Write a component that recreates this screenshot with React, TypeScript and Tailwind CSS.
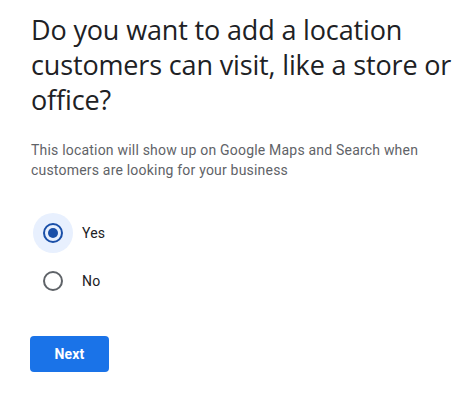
export default function App() {
  return (
    <div className="min-h-screen w-full bg-white pl-[31px] pr-[12px] pt-[12px]">
      <h1 className="font-['Open_Sans',sans-serif] text-[27px] leading-[35px] font-normal text-[#202124] tracking-[-0.15px]">
        Do you want to add a location customers can visit, like a store or office?
      </h1>
      <p className="mt-[23px] font-['Roboto',sans-serif] text-[14px] leading-[20px] tracking-[0.2px] text-[#5f6368] pr-[20px]">
        This location will show up on Google Maps and Search when customers are looking for your business
      </p>

      <div className="mt-[33px] flex flex-col gap-[8px] ml-[2px]">
        <label className="flex items-center gap-[9px]">
          <span className="flex h-[40px] w-[40px] items-center justify-center rounded-full bg-[#e8f0fe]">
            <span className="flex h-[20px] w-[20px] items-center justify-center rounded-full border-2 border-[#1a4fa8]">
              <span className="h-[10px] w-[10px] rounded-full bg-[#1a4fa8]" />
            </span>
          </span>
          <span className="font-['Roboto',sans-serif] text-[14px] tracking-[0.2px] text-[#202124]">Yes</span>
        </label>
        <label className="flex items-center gap-[9px]">
          <span className="flex h-[40px] w-[40px] items-center justify-center rounded-full">
            <span className="h-[20px] w-[20px] rounded-full border-2 border-[#5f6368]" />
          </span>
          <span className="font-['Roboto',sans-serif] text-[14px] tracking-[0.2px] text-[#202124]">No</span>
        </label>
      </div>

      <button className="mt-[35px] h-[36px] w-[79px] -ml-[1px] rounded-[4px] bg-[#1a73e8] font-['Roboto',sans-serif] text-[14px] font-bold tracking-[0.2px] text-white">
        Next
      </button>
    </div>
  );
}
